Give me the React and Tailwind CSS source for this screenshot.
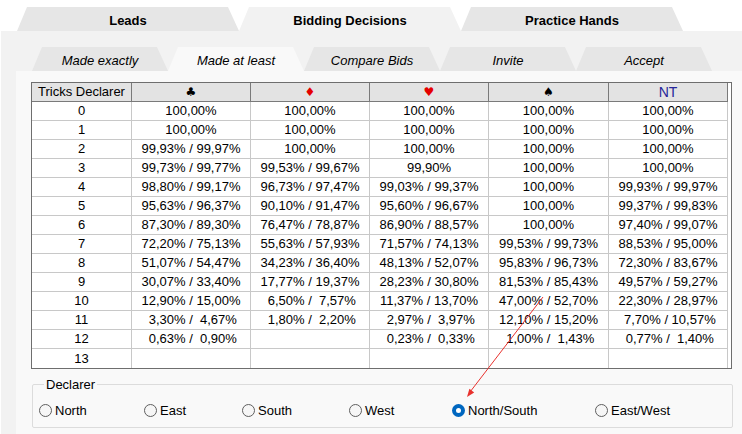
import React from "react";

const mainTabs = [
  { label: "Leads", active: false },
  { label: "Bidding Decisions", active: true },
  { label: "Practice Hands", active: false },
];

const subTabs = [
  { label: "Made exactly", active: false },
  { label: "Made at least", active: true },
  { label: "Compare Bids", active: false },
  { label: "Invite", active: false },
  { label: "Accept", active: false },
];

const rows = [
  ["100,00%", "100,00%", "100,00%", "100,00%", "100,00%"],
  ["100,00%", "100,00%", "100,00%", "100,00%", "100,00%"],
  ["99,93% / 99,97%", "100,00%", "100,00%", "100,00%", "100,00%"],
  ["99,73% / 99,77%", "99,53% / 99,67%", "99,90%", "100,00%", "100,00%"],
  ["98,80% / 99,17%", "96,73% / 97,47%", "99,03% / 99,37%", "100,00%", "99,93% / 99,97%"],
  ["95,63% / 96,37%", "90,10% / 91,47%", "95,60% / 96,67%", "100,00%", "99,37% / 99,83%"],
  ["87,30% / 89,30%", "76,47% / 78,87%", "86,90% / 88,57%", "100,00%", "97,40% / 99,07%"],
  ["72,20% / 75,13%", "55,63% / 57,93%", "71,57% / 74,13%", "99,53% / 99,73%", "88,53% / 95,00%"],
  ["51,07% / 54,47%", "34,23% / 36,40%", "48,13% / 52,07%", "95,83% / 96,73%", "72,30% / 83,67%"],
  ["30,07% / 33,40%", "17,77% / 19,37%", "28,23% / 30,80%", "81,53% / 85,43%", "49,57% / 59,27%"],
  ["12,90% / 15,00%", " 6,50% /  7,57%", "11,37% / 13,70%", "47,00% / 52,70%", "22,30% / 28,97%"],
  [" 3,30% /  4,67%", " 1,80% /  2,20%", " 2,97% /  3,97%", "12,10% / 15,20%", " 7,70% / 10,57%"],
  [" 0,63% /  0,90%", "", " 0,23% /  0,33%", " 1,00% /  1,43%", " 0,77% /  1,40%"],
  ["", "", "", "", ""],
];

const colWidths = ["w-[119px]", "w-[119px]", "w-[119px]", "w-[120px]", "w-[119px]"];

const radios = [
  { label: "North", w: "w-[105px]" },
  { label: "East", w: "w-[98px]" },
  { label: "South", w: "w-[107px]" },
  { label: "West", w: "w-[103px]" },
  { label: "North/South", w: "w-[143px]", checked: true },
  { label: "East/West", w: "w-[110px]" },
];

function Radio({ label, w, checked }) {
  return (
    <div className={`${w} flex items-center gap-[3px]`}>
      {checked ? (
        <span className="w-[13px] h-[13px] rounded-full bg-[#0067c0] flex items-center justify-center">
          <span className="w-[5px] h-[5px] rounded-full bg-white" />
        </span>
      ) : (
        <span className="w-[13px] h-[13px] rounded-full border border-[#5f5f5f] bg-[#f6f6f6]" />
      )}
      <span className="leading-[15px]">{label}</span>
    </div>
  );
}

function Header() {
  const head = "h-[19px] flex items-center justify-center border-r border-b border-[#7a7a7a] bg-[#e3e3e3]";
  const suit = "text-[12px] font-['DejaVu_Sans',sans-serif]";
  return (
    <div className="flex">
      <div className={`${head} w-[100px]`}>Tricks Declarer</div>
      <div className={`${head} ${suit} w-[119px] text-black`}>♣</div>
      <div className={`${head} ${suit} w-[119px] text-[#e50000]`}>♦</div>
      <div className={`${head} ${suit} w-[119px] text-[#e50000]`}>♥</div>
      <div className={`${head} ${suit} w-[120px] text-black`}>♠</div>
      <div className={`${head} w-[119px] text-[14px] text-[#26269a]`}>NT</div>
    </div>
  );
}

export default function App() {
  return (
    <div className="relative w-[742px] h-[434px] bg-white flex flex-col overflow-hidden text-[13px] text-black font-['Liberation_Sans',Arial,sans-serif]">
      {/* top tabs */}
      <div className="flex pt-[7px] pl-[17px]">
        {mainTabs.map((t) => (
          <div
            key={t.label}
            className={`w-[222px] h-[24px] pt-[3px] flex items-center justify-center font-bold [clip-path:polygon(10px_0,calc(100%_-_11px)_0,100%_100%,0_100%)] ${
              t.active ? "bg-[#f2f2f2]" : "bg-[#e6e6e6]"
            }`}
          >
            {t.label}
          </div>
        ))}
      </div>

      <div className="ml-[1px] flex-1 bg-[#f2f2f2] flex flex-col">
        {/* sub tabs */}
        <div className="flex pt-[16px] pl-[31px]">
          {subTabs.map((t) => (
            <div
              key={t.label}
              className={`w-[136px] h-[24px] pt-[3px] flex items-center justify-center italic [clip-path:polygon(10px_0,calc(100%_-_11px)_0,100%_100%,0_100%)] ${
                t.active ? "bg-[#f9f9f9]" : "bg-[#e6e6e6]"
              }`}
            >
              {t.label}
            </div>
          ))}
        </div>

        <div className="ml-[15px] flex-1 bg-[#f9f9f9] pt-[11px] pl-[15px]">
          {/* table */}
          <div className="w-[701px] border border-[#6e6e6e] bg-white pr-[3px]">
            <Header />
            {rows.map((r, i) => (
              <div key={i} className="flex">
                <div className={`w-[100px] h-[19px] flex items-center justify-center border-r border-[#c8c8c8] ${i < 13 ? "border-b" : ""}`}>
                  {i}
                </div>
                {r.map((v, j) => (
                  <div
                    key={j}
                    className={`${colWidths[j]} h-[19px] flex items-center justify-center whitespace-pre border-r border-[#c8c8c8] ${i < 13 ? "border-b" : ""}`}
                  >
                    {v}
                  </div>
                ))}
              </div>
            ))}
          </div>

          {/* declarer group */}
          <fieldset className="mt-[8px] w-[701px] ml-[1px] border border-[#dcdcdc] rounded-[2px] pl-[6px] pt-[11px] pb-[9px]">
            <legend className="ml-[5px] px-[2px] leading-[15px]">Declarer</legend>
            <div className="flex items-center">
              {radios.map((r) => (
                <Radio key={r.label} {...r} />
              ))}
            </div>
          </fieldset>
        </div>
      </div>

      {/* annotation arrow */}
      <svg className="absolute inset-0 pointer-events-none" width="742" height="434">
        <line x1="543" y1="297" x2="470" y2="392" stroke="#e8322e" strokeWidth="1" />
        <polygon points="467,397 474.2,392.4 469.4,388.8" fill="#e8322e" />
      </svg>
    </div>
  );
}
